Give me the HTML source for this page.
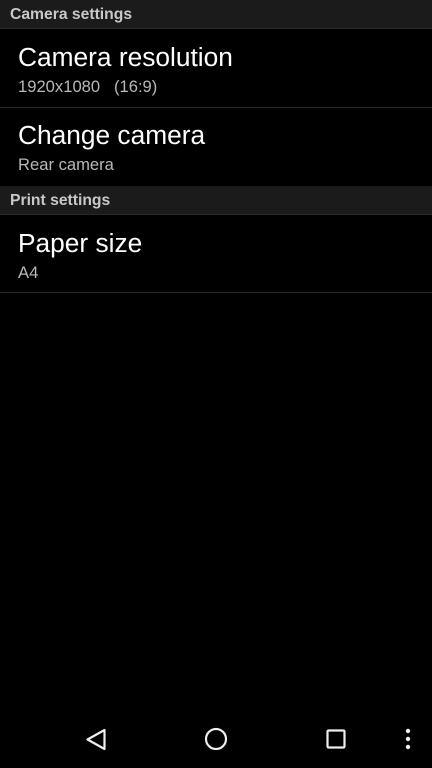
<!DOCTYPE html>
<html><head><meta charset="utf-8"><style>
body{margin:0;width:432px;height:768px;background:#000;font-family:"Liberation Sans",sans-serif;position:relative;overflow:hidden}
.h{position:absolute;left:0;width:432px;height:29px;background:#1b1b1b;border-bottom:1px solid #2a2a2a;color:#c8c8c8;font-weight:bold;font-size:15.7px;line-height:29px;padding-left:10px;box-sizing:border-box}
.t{position:absolute;left:18px;color:#fff;font-size:26.3px}
.s{position:absolute;left:18px;color:#b8b8b8;font-size:16.6px}
.d{position:absolute;left:0;width:432px;height:1px;background:#262626}
</style></head><body>
<div class="h" style="top:0">Camera settings</div>
<div class="t" style="top:42px">Camera resolution</div>
<div class="s" style="top:77px">1920x1080&nbsp;&nbsp;&nbsp;(16:9)</div>
<div class="d" style="top:107px"></div>
<div class="t" style="top:120px">Change camera</div>
<div class="s" style="top:155px">Rear camera</div>
<div class="h" style="top:186px">Print settings</div>
<div class="t" style="top:228px">Paper size</div>
<div class="s" style="top:263px">A4</div>
<div class="d" style="top:292px"></div>
<svg style="position:absolute;left:0;top:710px" width="432" height="58">
<path d="M104.5 20 L87.5 29.5 L104.5 39 Z" fill="none" stroke="#eee" stroke-width="2.2" stroke-linejoin="round"/>
<circle cx="216" cy="29" r="10" fill="none" stroke="#eee" stroke-width="2.2"/>
<rect x="327.5" y="20.5" width="17" height="17" rx="1" fill="none" stroke="#eee" stroke-width="2.2"/>
<circle cx="408" cy="21" r="2.2" fill="#eee"/><circle cx="408" cy="29" r="2.2" fill="#eee"/><circle cx="408" cy="37" r="2.2" fill="#eee"/>
</svg>
</body></html>
